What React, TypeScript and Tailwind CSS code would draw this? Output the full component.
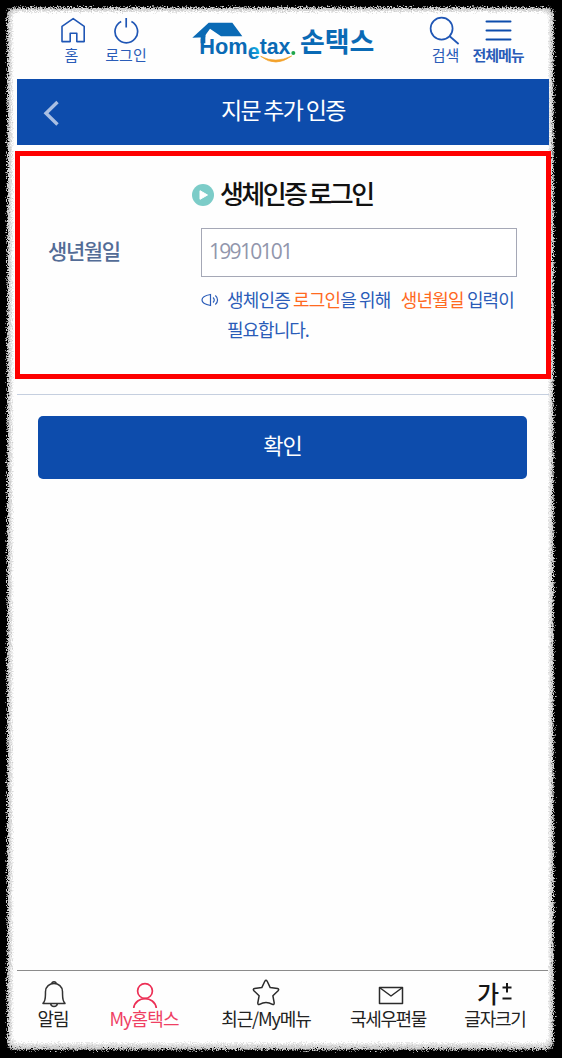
import React from "react";

const KR = "font-['Noto_Sans_CJK_KR','Noto_Sans',sans-serif]";

function PaperEdge() {
  return (
    <svg className="absolute inset-0" width="562" height="1058" viewBox="0 0 562 1058" aria-hidden="true">
      <defs>
        <filter id="rough" x="0" y="0" width="562" height="1058" filterUnits="userSpaceOnUse" colorInterpolationFilters="sRGB">
          <feTurbulence type="fractalNoise" baseFrequency="0.8" numOctaves="2" seed="4" result="noise" />
          <feDisplacementMap in="SourceGraphic" in2="noise" scale="9" xChannelSelector="R" yChannelSelector="G" />
        </filter>
      </defs>
      <rect width="562" height="1058" fill="#000" />
      <g filter="url(#rough)">
        <rect x="7" y="7" width="547" height="1043" rx="8" fill="#808080" />
        <rect x="8" y="8" width="545" height="1041" rx="8" fill="#cfcfcf" />
        <rect x="10.5" y="10.5" width="540" height="1035" rx="7" fill="#e8e8e8" />
        <rect x="12.5" y="12" width="536" height="1031" rx="6" fill="#fefefe" />
      </g>
      <rect x="14" y="14" width="534" height="1026" rx="6" fill="#fefefe" />
    </svg>
  );
}

function Logo() {
  return (
    <svg width="200" height="70" viewBox="0 0 600 210" aria-label="Hometax 손택스">
      <defs>
        <linearGradient id="cyan" x1="0" y1="1" x2="1" y2="0">
          <stop offset="0.25" stopColor="#0c70bb" />
          <stop offset="0.8" stopColor="#12b5ea" />
        </linearGradient>
      </defs>
      <path d="M37 83L86 38H157L187 79H123L90 56L76 76V82Z" fill="#0a6ab5" />
      <path d="M62 82L76 68V100H62Z" fill="#0a6ab5" />
      <g fontFamily="Liberation Sans, Arial, sans-serif" fontWeight="700" fill="#0a6ab5">
        <text x="58" y="131" fontSize="68" textLength="145" lengthAdjust="spacingAndGlyphs">Hom</text>
        <text x="203" y="147" fontSize="66" textLength="36" lengthAdjust="spacingAndGlyphs" fill="url(#cyan)">e</text>
        <text x="239" y="131" fontSize="68" textLength="92" lengthAdjust="spacingAndGlyphs">tax</text>
      </g>
      <circle cx="340" cy="129" r="6" fill="#1fa64a" />
      <path d="M242 139Q287 174 335 138Q287 162 242 139Z" fill="#f3a22b" stroke="#f3a22b" strokeWidth="2" />
      <text
        x="360"
        y="127"
        fontFamily="Noto Sans CJK KR, sans-serif"
        fontWeight="700"
        fontSize="82"
        fill="#0a6ab5"
        textLength="223"
        lengthAdjust="spacingAndGlyphs"
      >
        손택스
      </text>
    </svg>
  );
}

function TopBar() {
  return (
    <header className="flex h-[79px] text-[15px] leading-[18px] text-[#2a5cb8]">
      <div className="ml-[51px] flex w-[43px] flex-col items-center pt-4">
        <svg width="26" height="28" viewBox="0 0 26 28" fill="none" stroke="#1f56b5" strokeWidth="1.6">
          <path d="M2 10.4L13.2 2.6L24.2 10.4V25.6H16.8V17.2H10.2V25.6H2Z" strokeLinejoin="round" />
        </svg>
        <span className="mr-[2px] mt-[2px]">홈</span>
      </div>
      <div className="ml-[10px] flex w-11 flex-col items-center pt-4">
        <svg width="26" height="28" viewBox="0 0 26 28" fill="none" stroke="#1f56b5" strokeWidth="1.7">
          <path d="M8.2 5.4A11.3 11.3 0 1 0 18.4 5.4M13.2 2V11.4" />
        </svg>
        <span className="mt-[2px] whitespace-nowrap">로그인</span>
      </div>
      <div className="ml-[32px] pt-[10px]">
        <Logo />
      </div>
      <div className="ml-[42px] flex w-[44px] flex-col items-center pt-4">
        <svg width="32" height="30" viewBox="0 0 32 30" fill="none" stroke="#1f56b5" strokeWidth="1.7">
          <circle cx="13.6" cy="12.6" r="11" />
          <path d="M21.4 20L30.6 28" />
        </svg>
        <span className="ml-[3px]">검색</span>
      </div>
      <div className="ml-[7px] flex w-[50px] flex-col items-center pt-4">
        <svg width="28" height="28" viewBox="0 0 28 28" stroke="#0d4cac" strokeWidth="2" strokeLinecap="round">
          <path d="M2.5 5.5H26.5M2.5 14.4H26.5M2.5 23.4H26.5" />
        </svg>
        <span className="mt-[2px] whitespace-nowrap font-bold tracking-[-1.1px]">전체메뉴</span>
      </div>
    </header>
  );
}

function TabItem({ label, className, children }: { label: string; className: string; children: React.ReactNode }) {
  return (
    <div className={`flex shrink-0 flex-col items-center ${className}`}>
      <div className="flex h-[37px] items-end">{children}</div>
      <span className="whitespace-nowrap leading-5">{label}</span>
    </div>
  );
}

function BottomNav() {
  return (
    <nav className="ml-[17px] mr-[14px] mt-auto flex h-[88px] border-t border-[#8b8b8b] text-[18px] text-[#222]">
      <TabItem label="알림" className="ml-[16px] w-10 tracking-[-1px]">
        <svg className="ml-[2px]" width="26" height="28" viewBox="0 0 26 28" fill="none" stroke="#333" strokeWidth="1.5" strokeLinejoin="round">
          <path d="M2 23.4C5 20.5 4.3 17 4.5 11.5C4.7 6.5 8.5 3.6 13 3.6S21.3 6.5 21.5 11.5C21.7 17 21 20.5 24 23.4ZM10.8 3.5C11 1 15 1 15.2 3.5M9.5 23.6C10.3 27.4 15.7 27.4 16.5 23.6" />
        </svg>
      </TabItem>
      <TabItem label="My홈택스" className="ml-[31px] w-20 text-[#ef3f63] tracking-[-0.9px]">
        <svg className="ml-[2px]" width="26" height="27" viewBox="0 0 26 27" fill="none" stroke="#ec2f55" strokeWidth="1.7">
          <circle cx="13" cy="10" r="7.4" />
          <path d="M1.7 27C3.5 14.5 22.5 14.5 24.3 27" />
        </svg>
      </TabItem>
      <TabItem label="최근/My메뉴" className="ml-[32px] w-[100px] tracking-[-1.1px]">
        <svg className="mb-[2px]" width="28" height="27" viewBox="0 0 28 27" fill="none" stroke="#2b2b2b" strokeWidth="1.5" strokeLinejoin="round">
          <path d="M12.8 2.3Q14 .3 15.2 2.3L18.2 8.6L25.5 9.6Q27.5 10.1 26.1 11.7L20.9 16.8L22.2 23.9Q22.3 26.1 20.4 25.3Q14 21.5 7.6 25.3Q5.7 26.1 5.8 23.9L7.1 16.8L1.9 11.7Q.5 10.1 2.5 9.6L9.8 8.6Z" />
        </svg>
      </TabItem>
      <TabItem label="국세우편물" className="ml-[28px] w-[88px] tracking-[-1.4px]">
        <svg className="mb-[3px] ml-[6px]" width="26" height="19" viewBox="0 0 26 19" fill="none" stroke="#2b2b2b" strokeWidth="1.5" strokeLinejoin="round">
          <rect x="1.5" y="1.5" width="23" height="16" />
          <path d="M1.5 1.5L13 10L24.5 1.5" />
        </svg>
      </TabItem>
      <TabItem label="글자크기" className="ml-[27px] w-[72px] tracking-[-1.2px]">
        <div className="flex h-[27px] items-start text-[#161616]">
          <span className="text-[24px] font-medium leading-[24px] tracking-normal">가</span>
          <svg className="ml-[2px]" width="12" height="22" viewBox="0 0 12 22" stroke="#161616" strokeWidth="2">
            <path d="M6 2V11.500M1.500 6.500H10.500M1.500 17.500H10.500" />
          </svg>
        </div>
      </TabItem>
    </nav>
  );
}

export default function App() {
  return (
    <div className={`relative h-[1058px] w-[562px] overflow-hidden bg-black ${KR}`}>
      <PaperEdge />
      <div className="relative flex h-full flex-col">
        <TopBar />

        {/* Page title */}
        <div className="ml-[17px] flex h-[66px] w-[532px] items-center bg-[#0d4cac] text-white">
          <svg className="ml-[26px] mt-[2px]" width="17" height="26" viewBox="0 0 17 26" fill="none" stroke="#a9bfe3" strokeWidth="3.4">
            <path d="M14.5 2L3 13.2L14.5 24.5" />
          </svg>
          <h1 className="ml-[161px] whitespace-nowrap pb-[5px] text-[23px] leading-none tracking-[-1.7px]">지문 추가 인증</h1>
        </div>

        {/* Biometric login form */}
        <section className="ml-[15px] mt-[6px] h-[228px] w-[536px] border-[5px] border-[#fe0000] bg-[#fefefe]">
          <div className="ml-[172px] mt-[21px] flex h-8 items-center">
            <svg className="mt-1" width="22" height="22" viewBox="0 0 22 22">
              <circle cx="11" cy="11" r="11" fill="#7cccc8" />
              <path d="M8 6.7L15.5 11L8 15.3Z" fill="#fff" stroke="#fff" strokeLinejoin="round" />
            </svg>
            <h2 className="ml-[6px] whitespace-nowrap text-[26px] font-medium leading-none tracking-[-2.6px] text-[#111]">생체인증 로그인</h2>
          </div>
          <div className="mt-[19px] flex">
            <label htmlFor="birth" className="ml-[28px] mt-[10px] w-[153px] text-[21px] font-medium leading-6 tracking-[-1.4px] text-[#536c96]">
              생년월일
            </label>
            <div>
              <input
                id="birth"
                defaultValue="19910101"
                className="block h-[49px] w-[316px] border-[1.5px] border-[#a5a8b6] bg-white px-[7px] pb-[4px] font-['Open_Sans','Noto_Sans',sans-serif] text-[21px] font-normal tracking-[-1.7px] text-[#9196ac] outline-none"
              />
              <div className="mt-[7px] flex">
                <svg className="mt-[9px] shrink-0" width="18" height="14" viewBox="0 0 18 14" fill="none" stroke="#2a5cb8" strokeWidth="1.2">
                  <path d="M9.5 1.5V12.5C4 11.5 1 9.5 1 7S4 2.5 9.5 1.5ZM12 4.5C13.7 6 13.7 8 12 9.5M14.3 2.5C17.3 5 17.3 9 14.3 11.5" />
                </svg>
                <p className="ml-2 whitespace-pre text-[18px] leading-[30px] tracking-[-0.85px] text-[#2a5cb8]">
                  생체인증 <span className="text-[#ff6a1f]">로그인</span>을 위해{"  "}
                  <span className="ml-[4px] text-[#ff6a1f]">생년월일</span> 입력이
                  <br />
                  <span className="tracking-[-1px]">필요합니다.</span>
                </p>
              </div>
            </div>
          </div>
        </section>

        <hr className="ml-[17px] mt-[15px] w-[532px] border-t-[1.5px] border-[#c5cfdf]" />

        <button className="ml-[38px] mt-[21px] h-[63px] w-[489px] rounded-[5px] bg-[#0d4cac] pb-[6px] text-[22px] tracking-[-1px] text-white">
          확인
        </button>

        <BottomNav />
      </div>
    </div>
  );
}
